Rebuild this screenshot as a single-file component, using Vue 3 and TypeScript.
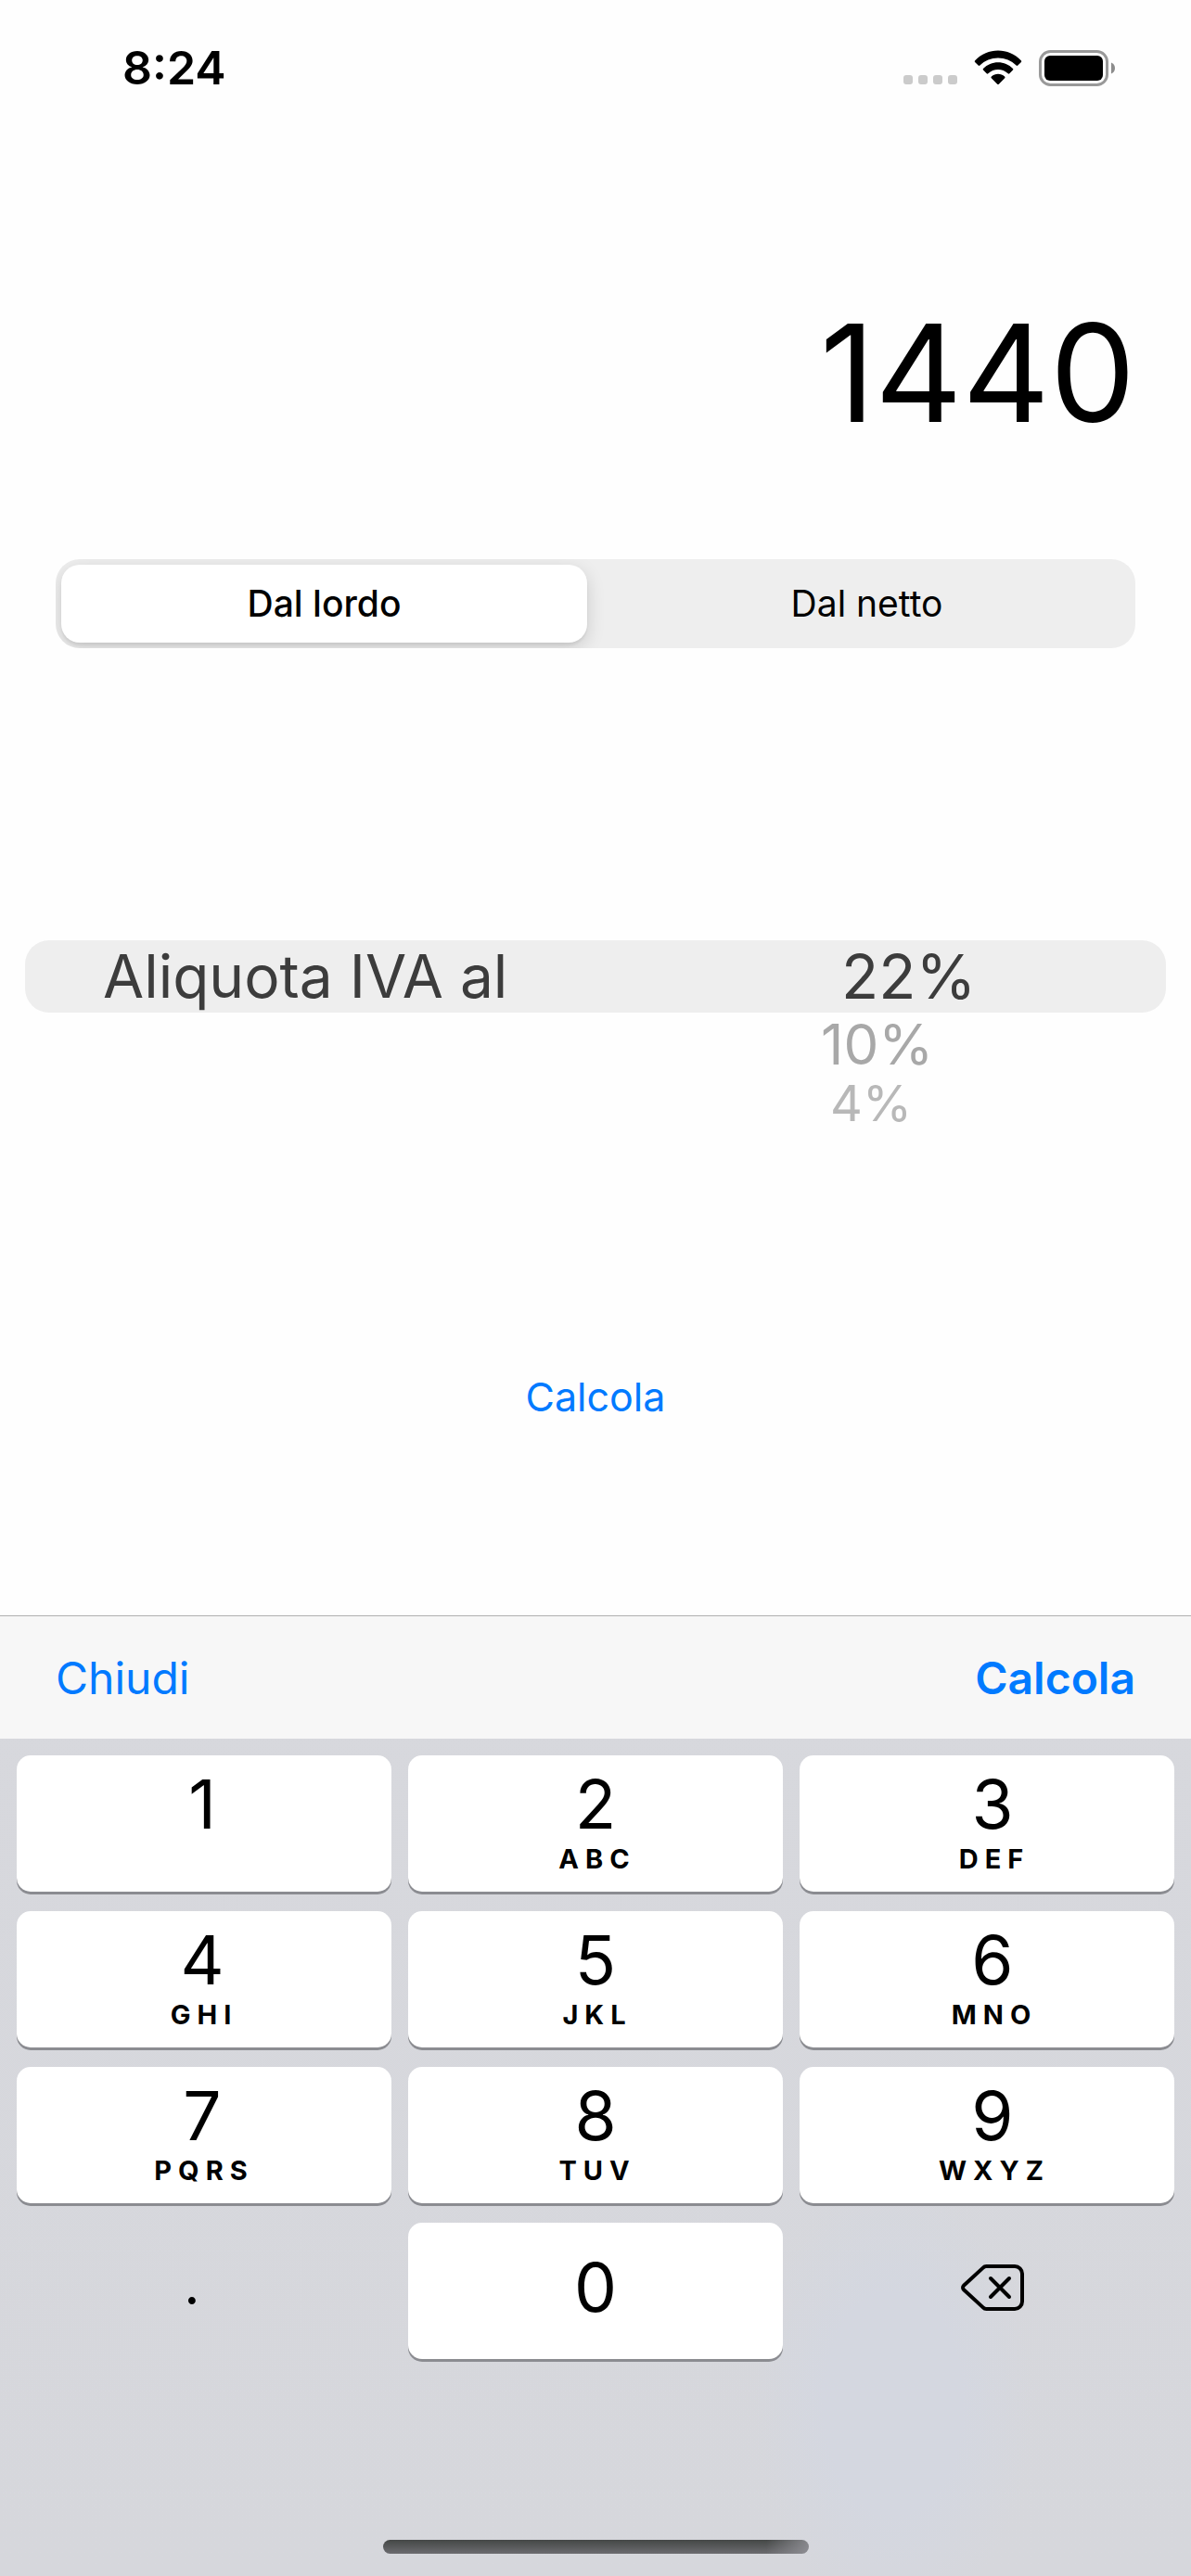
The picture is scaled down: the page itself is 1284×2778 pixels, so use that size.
<script setup lang="ts">
import { ref } from 'vue'

interface Key {
  digit: string
  letters: string
}

const amount = ref('1440')
const mode = ref('lordo')
const rate = ref('22%')

const modes = [
  { value: 'lordo', label: 'Dal lordo' },
  { value: 'netto', label: 'Dal netto' },
]

const rates = ['22%', '10%', '4%']

const keys: Key[] = [
  { digit: '1', letters: '' },
  { digit: '2', letters: 'ABC' },
  { digit: '3', letters: 'DEF' },
  { digit: '4', letters: 'GHI' },
  { digit: '5', letters: 'JKL' },
  { digit: '6', letters: 'MNO' },
  { digit: '7', letters: 'PQRS' },
  { digit: '8', letters: 'TUV' },
  { digit: '9', letters: 'WXYZ' },
]

function press(char: string) {
  amount.value += char
}

function erase() {
  amount.value = amount.value.slice(0, -1)
}
</script>

<template>
  <div class="screen">
    <header class="status">
      <span class="time">8:24</span>
      <div class="indicators">
        <span class="signal"><i v-for="n in 4" :key="n"></i></span>
        <svg class="wifi" width="52" height="38" viewBox="0 0 52 38" aria-hidden="true">
          <path d="M1.200 11.200C8 4.300 16.700.5 26 .5s18 3.800 24.800 10.700c.6.600.6 1.200.1 1.700l-3.600 3.600c-.5.500-1.200.5-1.700 0C40.300 11.300 33.400 8.500 26 8.500S11.700 11.300 6.400 16.500c-.5.500-1.200.5-1.700 0l-3.600-3.600c-.5-.5-.5-1.100.1-1.700z" />
          <path d="M10 20c4.400-4.300 10-6.700 16-6.700S37.600 15.700 42 20c.5.500.5 1.100 0 1.600l-3.700 3.700c-.5.500-1.100.5-1.600 0-3-2.800-6.700-4.300-10.700-4.300s-7.700 1.500-10.700 4.300c-.5.500-1.100.5-1.600 0L10 21.600c-.5-.5-.5-1.100 0-1.600z" />
          <path d="M18.900 28.600c2-1.800 4.400-2.800 7.100-2.800s5.100 1 7.100 2.800c.6.500.6 1.100.1 1.600l-6.400 6.500c-.5.500-1.100.5-1.600 0l-6.400-6.500c-.5-.5-.5-1.100.1-1.600z" />
        </svg>
        <svg class="battery" width="82" height="39" viewBox="0 0 82 39" aria-hidden="true">
          <rect x="1.500" y="1.500" width="72" height="36" rx="11" fill="none" stroke="#999" stroke-width="3" />
          <rect x="6" y="6" width="63" height="27" rx="6" fill="#000" />
          <path d="M78 13.500c2.500 1 4 3.300 4 6s-1.500 5-4 6z" fill="#8c8c8c" />
        </svg>
      </div>
    </header>

    <main class="content">
      <input v-model="amount" class="amount" type="text" inputmode="decimal" aria-label="Importo" />

      <div class="segments" role="radiogroup" aria-label="Tipo di calcolo">
        <label v-for="m in modes" :key="m.value" class="segment" :class="{ active: mode === m.value }">
          <input v-model="mode" type="radio" name="mode" :value="m.value" />
          <span>{{ m.label }}</span>
        </label>
      </div>

      <section class="picker">
        <span id="rate-label" class="picker-label">Aliquota IVA al</span>
        <div class="wheel" role="listbox" aria-labelledby="rate-label">
          <button
            v-for="r in rates"
            :key="r"
            type="button"
            class="rate"
            role="option"
            :aria-selected="rate === r"
            @click="rate = r"
          >
            {{ r }}
          </button>
        </div>
      </section>

      <button type="button" class="calculate">Calcola</button>
    </main>

    <section class="keyboard">
      <div class="toolbar">
        <button type="button">Chiudi</button>
        <button type="button" class="done">Calcola</button>
      </div>
      <div class="keys">
        <button v-for="k in keys" :key="k.digit" type="button" class="key" @click="press(k.digit)">
          <span class="digit">{{ k.digit }}</span>
          <span class="letters">{{ k.letters }}</span>
        </button>
        <button type="button" class="key single plain point" @click="press('.')">.</button>
        <button type="button" class="key single" @click="press('0')">
          <span class="digit">0</span>
        </button>
        <button type="button" class="key single plain" aria-label="Cancella" @click="erase">
          <svg width="70" height="52" viewBox="0 0 70 52" fill="none" stroke="#000" stroke-width="4" stroke-linejoin="round" stroke-linecap="round" aria-hidden="true">
            <path d="M28.500 3H59a8 8 0 0 1 8 8v30a8 8 0 0 1-8 8H28.500a5 5 0 0 1-3.700-1.600L4 28.200a3 3 0 0 1 0-4.400L24.800 4.600A5 5 0 0 1 28.500 3z" />
            <path d="M33 16l20 20M53 16L33 36" />
          </svg>
        </button>
      </div>
      <div class="home"></div>
    </section>
  </div>
</template>

<style>
body {
  background: #fff;
}
</style>

<style scoped>
.screen {
  display: flex;
  flex-direction: column;
  min-height: 100vh;
  color: #000;
  background: #fefefe;
  font-family: Inter, "Liberation Sans", sans-serif;
}

button,
input {
  margin: 0;
  padding: 0;
  border: 0;
  background: none;
  color: inherit;
  font: inherit;
}

.status {
  display: flex;
  justify-content: space-between;
  align-items: center;
  height: 60px;
  padding: 43px 82px 0 132px;
}

.time {
  font-size: 50px;
  font-weight: 600;
  line-height: 60px;
}

.indicators {
  display: flex;
  align-items: center;
  gap: 18px;
}

.signal {
  display: flex;
  gap: 6px;
  padding-top: 26px;
}

.signal i {
  width: 10px;
  height: 10px;
  border-radius: 3px;
  background: #cbcbcb;
}

.content {
  display: flex;
  flex: 1;
  flex-direction: column;
}

.amount {
  box-sizing: border-box;
  width: 100%;
  height: 180px;
  margin-top: 209px;
  padding: 0 60px;
  font-size: 146px;
  line-height: 180px;
  text-align: right;
  outline: 0;
}

.segments {
  display: flex;
  gap: 18px;
  margin: 111px 60px 0;
  padding: 6px;
  border-radius: 26px;
  background: #eee;
  overflow: hidden;
}

.segment {
  display: flex;
  flex: 1;
  justify-content: center;
  border-radius: 20px;
  font-size: 39px;
  line-height: 84px;
}

.segment.active {
  background: #fff;
  box-shadow: 0 6px 20px rgba(0, 0, 0, 0.14), 0 3px 3px rgba(0, 0, 0, 0.06);
  font-weight: 500;
}

.segment input {
  appearance: none;
  width: 0;
  height: 0;
}

.picker {
  display: flex;
  align-items: flex-start;
  height: 78px;
  margin: 315px 27px 0;
  border-radius: 26px;
  background: #eee;
  color: #3c3c3c;
  font-size: 66px;
  line-height: 78px;
}

.picker-label {
  flex: 1;
  padding-left: 84px;
  font-size: 64px;
}

.wheel {
  display: flex;
  flex-direction: column;
  align-items: flex-start;
  width: 350px;
}

.rate:nth-child(2) {
  margin-left: -22px;
  color: #a8a8a8;
  font-size: 60px;
  line-height: 68px;
}

.rate:nth-child(3) {
  margin-left: -12px;
  color: #b8b8b8;
  font-size: 54px;
  line-height: 60px;
}

.calculate {
  align-self: center;
  margin: 386px 0 200px;
  color: #007aff;
  font-size: 43px;
  line-height: 56px;
}

.keyboard {
  background:
    radial-gradient(ellipse 150px 240px at 75% 82%, #d4d7e0 50%, transparent 100%),
    linear-gradient(#d7d8dd, #d6d7dc);
}

.toolbar {
  display: flex;
  justify-content: space-between;
  align-items: center;
  height: 132px;
  padding: 0 60px;
  border-top: 1px solid #b0b0b0;
  background: #f7f7f7;
  color: #007aff;
  font-size: 48px;
}

.done {
  font-weight: 600;
}

.keys {
  display: grid;
  grid-template-columns: repeat(3, 1fr);
  grid-auto-rows: 147px;
  gap: 21px 18px;
  padding: 18px 18px 0;
}

.key {
  display: flex;
  flex-direction: column;
  align-items: center;
  padding-top: 13px;
  border-radius: 15px;
  background: #fff;
  box-shadow: 0 3px 0 #8b8c91;
}

.key:nth-child(3n) {
  padding-left: 12px;
}

.key:nth-child(3n + 1) {
  padding-right: 4px;
}

.digit {
  font-size: 73px;
  line-height: 80px;
}

.letters {
  padding-left: 4px;
  font-size: 29px;
  font-weight: 700;
  line-height: 38px;
  letter-spacing: 7px;
}

.single {
  justify-content: center;
  padding-top: 0;
  padding-bottom: 8px;
}

.plain {
  background: none;
  box-shadow: none;
}

.key.point {
  padding-right: 26px;
  padding-bottom: 16px;
  font-size: 60px;
}

.home {
  width: 459px;
  height: 15px;
  margin: 195px auto 24px;
  border-radius: 8px;
  background:
    linear-gradient(to right, transparent 90%, rgba(150, 150, 156, 0.8)),
    linear-gradient(#444746, #6c6c70);
}
</style>
